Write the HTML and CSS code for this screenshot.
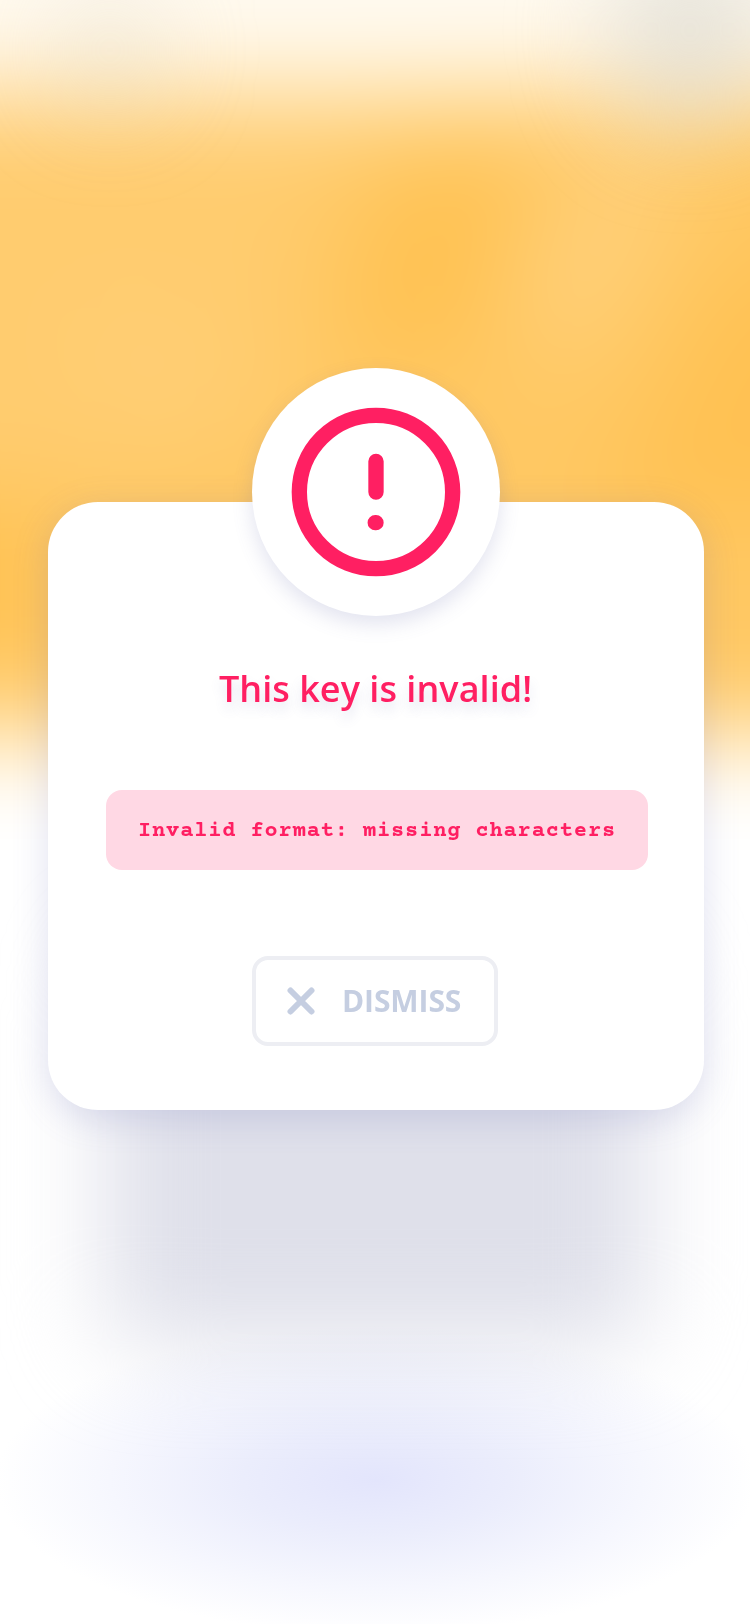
FILE: index.html
```html
<!DOCTYPE html>
<html lang="en">
<head>
<meta charset="utf-8">
<title>Invalid key</title>
<link rel="stylesheet" href="styles.css">
</head>
<body>
<main class="screen">
  <svg class="backdrop" viewBox="0 0 750 1624" aria-hidden="true">
    <defs>
      <filter id="soft" color-interpolation-filters="sRGB" filterUnits="userSpaceOnUse" x="-300" y="-300" width="1350" height="2224"><feGaussianBlur stdDeviation="50"/></filter>
      <filter id="wide" color-interpolation-filters="sRGB" filterUnits="userSpaceOnUse" x="-300" y="-300" width="1350" height="2224"><feGaussianBlur stdDeviation="48"/></filter>
      <radialGradient id="glow">
        <stop offset="0" stop-color="#e3e5fc"/>
        <stop offset=".35" stop-color="#ebedfc"/>
        <stop offset=".7" stop-color="#f6f7fe"/>
        <stop offset="1" stop-color="#fff"/>
      </radialGradient>
    </defs>
    <g filter="url(#soft)">
      <rect x="-200" y="-200" width="1150" height="2024" fill="#fff"/>
      <rect x="-200" y="-200" width="1150" height="300" fill="#fffaf0"/>
      <rect x="-200" y="94" width="1150" height="640" fill="#ffc863"/>
      <path d="M-200 94H440C300 220 250 290 330 360L240 460 0 500H-200z" fill="#ffcc6f"/>
      <path d="M60 310L180 310 250 420 120 430z" fill="#ffce75"/>
      <path d="M590 140H690L650 250 580 370 510 320z" fill="#ffd07b"/>
      <path d="M400 170L510 170 470 350 340 350z" fill="#ffc150"/>
      <path d="M720 280L950 200V520H600z" fill="#ffc152"/>
      <path d="M-200 500H40V640H-200z" fill="#ffc150"/>
    </g>
    <g filter="url(#wide)">
      <ellipse cx="110" cy="50" rx="50" ry="60" fill="#ded8c4" opacity=".4"/>
      <ellipse cx="690" cy="30" rx="80" ry="100" fill="#dcdad2" opacity=".65"/>
      <rect x="106" y="950" width="542" height="394" rx="40" fill="#dfe0ea"/>
    </g>
    <ellipse cx="376" cy="1480" rx="380" ry="154" fill="url(#glow)" class="glow"/>
  </svg>
  <section class="card" role="alertdialog">
    <div class="badge">
      <svg class="alert" viewBox="0 0 24 24"><circle cx="12" cy="12" r="10"/><path d="M12 8v4M11.9 16H12"/></svg>
    </div>
    <h1 class="title">This key is invalid!</h1>
    <div class="detail">Invalid format: missing characters</div>
    <button class="dismiss" type="button">
      <svg class="cross" viewBox="0 0 28 28"><path d="M3.500 3.500l21 21M24.500 3.500l-21 21"/></svg>
      <span class="label">DISMISS</span>
    </button>
  </section>
</main>
</body>
</html>
```
FILE: styles.css
```css
* { box-sizing: border-box; }
body { margin: 0; background: #fff; font-family: "Open Sans", "Noto Sans", sans-serif; }
.screen { position: relative; width: 750px; height: 1624px; padding: 502px 46px 0 48px; overflow: hidden; }
.backdrop { position: absolute; inset: 0; width: 750px; height: 1624px; }
.glow { mix-blend-mode: multiply; }
.card {
  position: relative;
  display: flex;
  flex-direction: column;
  align-items: center;
  height: 608px;
  border-radius: 50px;
  background: #fff;
  box-shadow: 0 8px 36px rgba(100, 105, 180, .2);
}
.badge {
  display: flex;
  align-items: center;
  justify-content: center;
  flex: none;
  width: 248px;
  height: 248px;
  margin-top: -134px;
  border-radius: 50%;
  background: #fff;
  box-shadow: 0 8px 20px rgba(100, 105, 170, .19);
}
.alert { width: 184px; height: 184px; fill: none; stroke: #ff1f62; stroke-width: 2; stroke-linecap: round; }
.title {
  margin: 48px 1px 0 0;
  color: #ff1f62;
  font-size: 36px;
  font-weight: 600;
  letter-spacing: .04px;
  line-height: 50px;
  white-space: nowrap;
  text-shadow: 0 8px 12px rgba(100, 105, 170, .18);
}
.detail {
  width: 542px;
  height: 80px;
  margin: 76px 0 0 2px;
  padding-top: 2px;
  border-radius: 16px;
  background: #ffd8e4;
  color: #ff1f62;
  font-family: "Courier Prime", "Nimbus Mono PS", "Courier New", "Liberation Mono", monospace;
  font-size: 22px;
  font-weight: 700;
  letter-spacing: .87px;
  line-height: 80px;
  text-align: center;
  white-space: nowrap;
}
.dismiss {
  display: flex;
  align-items: center;
  width: 246px;
  height: 90px;
  margin: 86px 2px 0 0;
  padding: 0 0 0 31px;
  gap: 27px;
  border: 4px solid #edeef3;
  border-radius: 16px;
  background: #fff;
  color: #c5cee1;
  font: 700 30px "Open Sans", "Noto Sans", sans-serif;
}
.label { padding-bottom: 2px; letter-spacing: -.1px; }
.cross { flex: none; width: 28px; height: 28px; fill: none; stroke: currentColor; stroke-width: 6; stroke-linecap: round; }
```
